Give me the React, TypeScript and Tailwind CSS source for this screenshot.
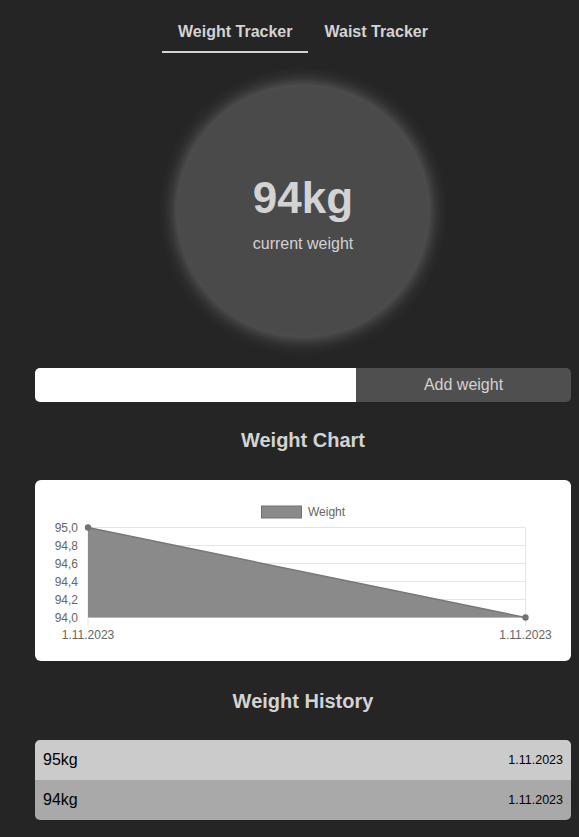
import React from "react";

const font = { fontFamily: '"Liberation Sans", Arial, sans-serif' };

function WeightChart() {
  const left = 53;
  const right = 490.5;
  const top = 47.5;
  const bottom = 137.5;
  const step = (bottom - top) / 5;
  const labels = ["95,0", "94,8", "94,6", "94,4", "94,2", "94,0"];
  return (
    <svg width="536" height="181" viewBox="0 0 536 181" className="block">
      {/* legend */}
      <rect x="226.5" y="26" width="40" height="12" fill="#8a8a8a" stroke="#707070" strokeWidth="1" />
      <text x="273" y="36" fontSize="12" fill="#666" style={font}>
        Weight
      </text>
      {/* grid */}
      {labels.map((l, i) => {
        const y = top + step * i;
        return (
          <g key={l}>
            <line x1={left} x2={right} y1={y} y2={y} stroke="#e4e4e4" strokeWidth="1" />
            <text x="43" y={y + 4} fontSize="12" fill="#666" textAnchor="end" style={font}>
              {l}
            </text>
          </g>
        );
      })}
      <line x1={left} x2={left} y1={top} y2={bottom + 8} stroke="#e4e4e4" strokeWidth="1" />
      <line x1={right} x2={right} y1={top} y2={bottom + 8} stroke="#e4e4e4" strokeWidth="1" />
      {/* area */}
      <polygon points={`${left},${top} ${right},${bottom} ${left},${bottom}`} fill="#8a8a8a" />
      <line x1={left} y1={top} x2={right} y2={bottom} stroke="#777" strokeWidth="1.5" />
      <circle cx={left} cy={top} r="3.2" fill="#737373" />
      <circle cx={right} cy={bottom} r="3.2" fill="#737373" />
      <text x={left} y="158.5" fontSize="12" fill="#666" textAnchor="middle" style={font}>
        1.11.2023
      </text>
      <text x={right} y="158.5" fontSize="12" fill="#666" textAnchor="middle" style={font}>
        1.11.2023
      </text>
    </svg>
  );
}

export default function App() {
  const history = [
    { w: "95kg", d: "1.11.2023", bg: "bg-[#cbcbcb]" },
    { w: "94kg", d: "1.11.2023", bg: "bg-[#a9a9a9]" },
  ];
  return (
    <div className="min-h-[837px] bg-[#252525] pb-8" style={font}>
      <div className="ml-[35px] flex w-[536px] flex-col items-center">
        <div className="mt-[10px] flex">
          <button className="border-b-2 border-[#d3d3d3] px-4 pb-[10px] pt-[13px] text-base font-bold leading-[18px] text-[#d3d3d3]">
            Weight Tracker
          </button>
          <button className="border-b-2 border-transparent px-4 pb-[10px] pt-[13px] text-base font-bold leading-[18px] text-[#d3d3d3]">
            Waist Tracker
          </button>
        </div>

        <div className="mt-[33px] flex h-[250px] w-[250px] flex-col items-center justify-center rounded-full bg-[#4a4a4a] pt-1 shadow-[0_0_20px_rgba(255,255,255,0.4)]">
          <div className="text-[44px] font-bold leading-[50px] text-[#d3d3d3]">94kg</div>
          <div className="mt-3 text-base leading-[18px] text-[#d3d3d3]">current weight</div>
        </div>

        <div className="mt-[32px] flex h-[34px] w-full overflow-hidden rounded-[5px]">
          <input className="h-full w-[321px] bg-white px-2 text-base text-black outline-none" />
          <button className="flex-1 bg-[#4f4f4f] text-base text-[#d3d3d3]">Add weight</button>
        </div>

        <h2 className="mt-[27px] text-xl font-bold leading-[23px] text-[#d3d3d3]">Weight Chart</h2>

        <div className="mt-[28px] h-[181px] w-full overflow-hidden rounded-[6px] bg-white">
          <WeightChart />
        </div>

        <h2 className="mt-[29px] text-xl font-bold leading-[23px] text-[#d3d3d3]">Weight History</h2>

        <div className="mt-[27px] w-full overflow-hidden rounded-[5px]">
          {history.map((h) => (
            <div key={h.w} className={`flex h-10 items-center justify-between px-2 ${h.bg}`}>
              <span className="text-base text-black">{h.w}</span>
              <span className="text-[12.5px] text-black">{h.d}</span>
            </div>
          ))}
        </div>
      </div>
    </div>
  );
}
